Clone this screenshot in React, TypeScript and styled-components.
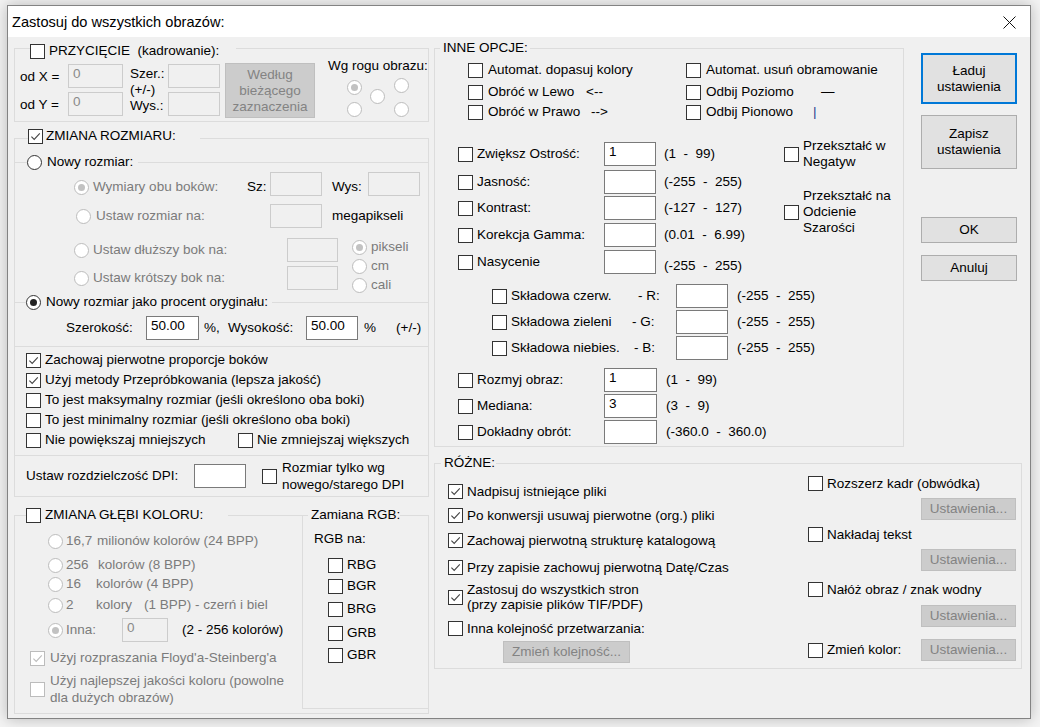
import React from "react";
import styled, { createGlobalStyle } from "styled-components";

const GlobalStyle = createGlobalStyle`
  html, body { margin: 0; padding: 0; }
  body {
    background: #f4f4f4;
    font-family: "Liberation Sans", Arial, sans-serif;
    font-size: 13.5px;
    color: #000;
  }
  *, *::before, *::after { box-sizing: border-box; }
`;

const Page = styled.div`
  width: 1040px;
  height: 727px;
  padding: 5px 0 0 7px;
  overflow: hidden;
`;

const Window = styled.div`
  width: 1024px;
  height: 714px;
  border: 1px solid #838383;
  background: #f0f0f0;
  box-shadow: 0 0 14px rgba(0, 0, 0, 0.25);
  display: flex;
  flex-direction: column;
`;

const TitleBar = styled.div`
  flex: none;
  height: 31px;
  background: #fff;
  display: flex;
  align-items: center;
  padding-left: 4px;
`;

const Title = styled.div`
  flex: 1;
  font-size: 14.6px;
  line-height: 18px;
  padding-top: 1px;
`;

const Close = styled.div`
  flex: none;
  width: 13px;
  height: 13px;
  margin: 2px 14px 0 0;
  display: flex;
`;

const Body = styled.div`
  flex: 1;
  display: flex;
  align-items: flex-start;
  padding-left: 6px;
`;

const Column = styled.div<{ $w?: number; $ml?: number; $mt?: number; $pt?: number; $gap?: number }>`
  flex: none;
  display: flex;
  flex-direction: column;
  align-items: flex-start;
  ${(p) => (p.$w != null ? `width: ${p.$w}px;` : "")}
  margin-left: ${(p) => p.$ml ?? 0}px;
  margin-top: ${(p) => p.$mt ?? 0}px;
  padding-top: ${(p) => p.$pt ?? 0}px;
  gap: ${(p) => p.$gap ?? 0}px;
`;

const Row = styled.div<{ $h: number; $mt?: number; $top?: boolean }>`
  flex: none;
  display: flex;
  align-items: ${(p) => (p.$top ? "flex-start" : "center")};
  height: ${(p) => p.$h}px;
  margin-top: ${(p) => p.$mt ?? 0}px;
`;

const Slot = styled.div<{ $w?: number; $ml?: number; $mt?: number; $gap?: number }>`
  flex: none;
  display: flex;
  align-items: center;
  ${(p) => (p.$w != null ? `width: ${p.$w}px;` : "")}
  margin-left: ${(p) => p.$ml ?? 0}px;
  ${(p) => (p.$mt != null ? `align-self: flex-start; margin-top: ${p.$mt}px;` : "")}
  gap: ${(p) => p.$gap ?? 0}px;
`;

const Text = styled.span<{ $dim?: boolean; $color?: string; $lh?: number }>`
  white-space: pre;
  line-height: ${(p) => p.$lh ?? 16}px;
  color: ${(p) => p.$color ?? (p.$dim ? "#7b7b7b" : "#000")};
`;

const Mark = styled.span<{ $dim?: boolean; $round?: boolean }>`
  flex: none;
  width: 15px;
  height: 15px;
  border: 1px solid ${(p) => (p.$dim ? "#bcbcbc" : "#333")};
  border-radius: ${(p) => (p.$round ? "50%" : "0")};
  background: #fff;
  display: flex;
  align-items: center;
  justify-content: center;
`;

const Dot = styled.span<{ $dim?: boolean }>`
  width: 7px;
  height: 7px;
  border-radius: 50%;
  background: ${(p) => (p.$dim ? "#c2c2c2" : "#222")};
`;

const Field = styled.div<{ $w: number; $dim?: boolean }>`
  flex: none;
  width: ${(p) => p.$w}px;
  height: 24px;
  border: 1px solid ${(p) => (p.$dim ? "#cccccc" : "#7a7a7a")};
  background: ${(p) => (p.$dim ? "#f0f0f0" : "#fff")};
  color: ${(p) => (p.$dim ? "#8a8a8a" : "#000")};
  padding: 1px 0 0 4px;
  line-height: 16px;
  white-space: pre;
`;

const Btn = styled.button<{
  $w: number;
  $h: number;
  $ml?: number;
  $mt?: number;
  $dim?: boolean;
  $default?: boolean;
}>`
  flex: none;
  width: ${(p) => p.$w}px;
  height: ${(p) => p.$h}px;
  margin: ${(p) => p.$mt ?? 0}px 0 0 ${(p) => p.$ml ?? 0}px;
  padding: 0;
  font: inherit;
  line-height: 16px;
  display: flex;
  align-items: center;
  justify-content: center;
  text-align: center;
  white-space: pre;
  background: ${(p) => (p.$dim ? "#cccccc" : "#e1e1e1")};
  color: ${(p) => (p.$dim ? "#838383" : "#000")};
  border: ${(p) => (p.$default ? "2px solid #0078d7" : `1px solid ${p.$dim ? "#bfbfbf" : "#adadad"}`)};
`;

const Group = styled.div<{ $w: number; $h: number; $mt?: number; $ml?: number }>`
  flex: none;
  width: ${(p) => p.$w}px;
  height: ${(p) => p.$h}px;
  margin-top: ${(p) => p.$mt ?? 0}px;
  margin-left: ${(p) => p.$ml ?? 0}px;
  border: 1px solid #dcdcdc;
  display: flex;
  flex-direction: column;
`;

const SubGroup = styled.div<{ $w: number; $h: number }>`
  flex: none;
  width: ${(p) => p.$w}px;
  height: ${(p) => p.$h}px;
  border-left: 1px solid #dcdcdc;
  border-bottom: 1px solid #dcdcdc;
  display: flex;
  flex-direction: column;
`;

const Legend = styled.div<{ $x: number; $top: number; $w: number; $gap?: number; $pl?: number }>`
  flex: none;
  align-self: flex-start;
  display: flex;
  align-items: center;
  width: ${(p) => p.$w}px;
  height: 16px;
  margin: ${(p) => p.$top}px 0 ${(p) => -(p.$top + 16)}px ${(p) => p.$x}px;
  padding-left: ${(p) => p.$pl ?? 0}px;
  gap: ${(p) => p.$gap ?? 0}px;
  background: #f0f0f0;
  position: relative;
  z-index: 1;
`;

const Section = styled.div<{ $mt: number }>`
  flex: none;
  display: flex;
  flex-direction: column;
  border-top: 1px solid #dcdcdc;
  margin-top: ${(p) => p.$mt}px;
`;

const CornerGrid = styled.div`
  display: grid;
  grid-template-columns: 23px 24px 15px;
  grid-template-rows: 11px 13px 15px;
  margin: 4px 0 0 19px;
`;

const Cell = styled.div<{ $r: number; $c: number; $dy?: number }>`
  grid-row: ${(p) => p.$r};
  grid-column: ${(p) => p.$c};
  margin-top: ${(p) => p.$dy ?? 0}px;
  height: 15px;
`;

const Check = ({ on, dim }: { on?: boolean; dim?: boolean }) => (
  <Mark $dim={dim}>
    {on && (
      <svg width="13" height="13" viewBox="0 0 13 13">
        <path
          d="M2.4 6.6 L5.2 9.4 L10.8 3.4"
          fill="none"
          stroke={dim ? "#bcbcbc" : "#444"}
          strokeWidth="1.1"
        />
      </svg>
    )}
  </Mark>
);

const Radio = ({ on, dim }: { on?: boolean; dim?: boolean }) => (
  <Mark $round $dim={dim}>
    {on && <Dot $dim={dim} />}
  </Mark>
);

type CbRowProps = { label: string; on?: boolean; mt?: number };

const CropGroup = () => (
  <Group $w={415} $h={74} $mt={11}>
    <Legend $x={15} $top={-6} $w={206} $gap={4}>
      <Check />
      <Text>{"PRZYCIĘCIE  (kadrowanie):"}</Text>
    </Legend>
    <Row $h={72} $top>
      <Column $ml={5} $w={48} $pt={20} $gap={12}>
        <Text>od X =</Text>
        <Text>od Y =</Text>
      </Column>
      <Column $w={55} $pt={15} $gap={4}>
        <Field $w={55} $dim>0</Field>
        <Field $w={55} $dim>0</Field>
      </Column>
      <Column $ml={7} $w={38} $pt={17}>
        <Text>Szer.:</Text>
        <Text>(+/-)</Text>
        <Text>Wys.:</Text>
      </Column>
      <Column $w={52} $pt={15} $gap={4}>
        <Field $w={52} $dim />
        <Field $w={52} $dim />
      </Column>
      <Btn $w={90} $h={55} $ml={5} $mt={14} $dim>
        <span>{"Według\nbieżącego\nzaznaczenia"}</span>
      </Btn>
      <Column $ml={13} $pt={9}>
        <Text>Wg rogu obrazu:</Text>
        <CornerGrid>
          <Cell $r={1} $c={1} $dy={2}>
            <Radio on dim />
          </Cell>
          <Cell $r={1} $c={3}>
            <Radio dim />
          </Cell>
          <Cell $r={2} $c={2}>
            <Radio dim />
          </Cell>
          <Cell $r={3} $c={1}>
            <Radio dim />
          </Cell>
          <Cell $r={3} $c={3}>
            <Radio dim />
          </Cell>
        </CornerGrid>
      </Column>
    </Row>
  </Group>
);

const SideRow = ({ label, mt }: { label: string; mt?: number }) => (
  <Row $h={24} $mt={mt}>
    <Slot $w={213} $gap={4}>
      <Radio dim />
      <Text $dim>{label}</Text>
    </Slot>
    <Field $w={51} $dim />
  </Row>
);

const ResizeCheck = ({ label, on, mt }: CbRowProps) => (
  <Row $h={20} $mt={mt}>
    <Slot $ml={11} $gap={4}>
      <Check on={on} />
      <Text>{label}</Text>
    </Slot>
  </Row>
);

const ResizeGroup = () => (
  <Group $w={415} $h={359} $mt={16}>
    <Legend $x={13} $top={-11} $w={172} $gap={3}>
      <Check on />
      <Text>ZMIANA ROZMIARU:</Text>
    </Legend>
    <Section $mt={23}>
      <Legend $x={12} $top={-9} $w={111} $gap={5}>
        <Radio />
        <Text>Nowy rozmiar:</Text>
      </Legend>
      <Row $h={24} $mt={9}>
        <Slot $ml={59} $w={173} $gap={4} $mt={7}>
          <Radio on dim />
          <Text $dim>Wymiary obu boków:</Text>
        </Slot>
        <Slot $w={23} $mt={7}>
          <Text>Sz:</Text>
        </Slot>
        <Field $w={52} $dim />
        <Slot $ml={10} $w={36} $mt={7}>
          <Text>Wys:</Text>
        </Slot>
        <Field $w={52} $dim />
      </Row>
      <Row $h={24} $mt={8}>
        <Slot $ml={61} $w={194} $gap={5}>
          <Radio dim />
          <Text $dim>Ustaw rozmiar na:</Text>
        </Slot>
        <Field $w={52} $dim />
        <Slot $ml={10}>
          <Text>megapikseli</Text>
        </Slot>
      </Row>
      <Row $h={52} $mt={10} $top>
        <Column $ml={59}>
          <SideRow label="Ustaw dłuższy bok na:" />
          <SideRow label="Ustaw krótszy bok na:" mt={4} />
        </Column>
        <Column $ml={14} $pt={1} $gap={3}>
          <Slot $gap={4}>
            <Radio on dim />
            <Text $dim>pikseli</Text>
          </Slot>
          <Slot $gap={4}>
            <Radio dim />
            <Text $dim>cm</Text>
          </Slot>
          <Slot $gap={4}>
            <Radio dim />
            <Text $dim>cali</Text>
          </Slot>
        </Column>
      </Row>
    </Section>
    <Section $mt={12}>
      <Legend $x={11} $top={-9} $w={246} $gap={5}>
        <Radio on />
        <Text>Nowy rozmiar jako procent oryginału:</Text>
      </Legend>
      <Row $h={24} $mt={13}>
        <Slot $ml={51} $w={80}>
          <Text>Szerokość:</Text>
        </Slot>
        <Field $w={53}>50.00</Field>
        <Slot $ml={5} $w={24}>
          <Text>%,</Text>
        </Slot>
        <Slot $w={78}>
          <Text>Wysokość:</Text>
        </Slot>
        <Field $w={52}>50.00</Field>
        <Slot $ml={6} $w={32}>
          <Text>%</Text>
        </Slot>
        <Text>(+/-)</Text>
      </Row>
    </Section>
    <Section $mt={6}>
      <ResizeCheck label="Zachowaj pierwotne proporcje boków" on mt={3} />
      <ResizeCheck label="Użyj metody Przepróbkowania (lepsza jakość)" on />
      <ResizeCheck label="To jest maksymalny rozmiar (jeśli określono oba boki)" />
      <ResizeCheck label="To jest minimalny rozmiar (jeśli określono oba boki)" />
      <Row $h={20}>
        <Slot $ml={11} $w={212} $gap={4}>
          <Check />
          <Text>Nie powiększaj mniejszych</Text>
        </Slot>
        <Slot $gap={4}>
          <Check />
          <Text>Nie zmniejszaj większych</Text>
        </Slot>
      </Row>
    </Section>
    <Section $mt={5}>
      <Row $h={24} $mt={8}>
        <Slot $ml={11} $w={168}>
          <Text>Ustaw rozdzielczość DPI:</Text>
        </Slot>
        <Field $w={52} />
        <Slot $ml={16} $gap={5}>
          <Check />
          <Text $lh={17}>{"Rozmiar tylko wg\nnowego/starego DPI"}</Text>
        </Slot>
      </Row>
    </Section>
  </Group>
);

const DepthRow = ({
  mt,
  h = 18,
  parts,
  widths,
  on,
}: {
  mt: number;
  h?: number;
  parts: string[];
  widths: number[];
  on?: boolean;
}) => (
  <Row $h={h} $mt={mt}>
    <Slot $ml={33} $w={18}>
      <Radio dim on={on} />
    </Slot>
    {parts.map((p, i) => (
      <Slot key={i} $w={widths[i]}>
        <Text $dim>{p}</Text>
      </Slot>
    ))}
  </Row>
);

const RgbRow = ({ label, mt }: { label: string; mt: number }) => (
  <Row $h={20} $mt={mt}>
    <Slot $ml={25} $gap={4}>
      <Check />
      <Text>{label}</Text>
    </Slot>
  </Row>
);

const DepthGroup = () => (
  <Group $w={415} $h={199} $mt={18}>
    <Legend $x={11} $top={-9} $w={202} $gap={4}>
      <Check />
      <Text>ZMIANA GŁĘBI KOLORU:</Text>
    </Legend>
    <Row $h={197} $top>
      <Column $w={287}>
        <DepthRow mt={16} parts={["16,7", "milionów kolorów (24 BPP)"]} widths={[31]} />
        <DepthRow mt={6} parts={["256", "kolorów (8 BPP)"]} widths={[32]} />
        <DepthRow mt={1} parts={["16", "kolorów (4 BPP)"]} widths={[30]} />
        <DepthRow mt={3} parts={["2", "kolory", "(1 BPP) - czerń i biel"]} widths={[30, 48]} />
        <Row $h={24} $mt={4}>
          <Slot $ml={33} $w={18}>
            <Radio dim on />
          </Slot>
          <Slot $w={56}>
            <Text $dim>Inna:</Text>
          </Slot>
          <Field $w={46} $dim>
            0
          </Field>
          <Slot $ml={14}>
            <Text>(2 - 256 kolorów)</Text>
          </Slot>
        </Row>
        <Row $h={18} $mt={7}>
          <Slot $ml={15} $gap={5}>
            <Check on dim />
            <Text $dim>Użyj rozpraszania Floyd'a-Steinberg'a</Text>
          </Slot>
        </Row>
        <Row $h={34} $mt={5}>
          <Slot $ml={15} $gap={5}>
            <Check dim />
            <Text $dim $lh={17}>
              {"Użyj najlepszej jakości koloru (powolne\ndla dużych obrazów)"}
            </Text>
          </Slot>
        </Row>
      </Column>
      <SubGroup $w={126} $h={193}>
        <Legend $x={5} $top={-9} $w={92} $pl={3}>
          <Text>Zamiana RGB:</Text>
        </Legend>
        <Row $h={16} $mt={15}>
          <Slot $ml={11}>
            <Text>RGB na:</Text>
          </Slot>
        </Row>
        <RgbRow label="RBG" mt={8} />
        <RgbRow label="BGR" mt={1} />
        <RgbRow label="BRG" mt={3} />
        <RgbRow label="GRB" mt={4} />
        <RgbRow label="GBR" mt={2} />
      </SubGroup>
    </Row>
  </Group>
);

const OptPair = ({
  mt,
  left,
  leftW,
  leftExtra,
  right,
  rightW,
  rightExtra,
  extraColor,
}: {
  mt: number;
  left: string;
  leftW?: number;
  leftExtra?: string;
  right: string;
  rightW?: number;
  rightExtra?: string;
  extraColor?: string;
}) => (
  <Row $h={20} $mt={mt}>
    <Slot $ml={33} $w={218} $gap={5}>
      <Check />
      <Slot $w={leftW}>
        <Text>{left}</Text>
      </Slot>
      {leftExtra && <Text>{leftExtra}</Text>}
    </Slot>
    <Slot $gap={5}>
      <Check />
      <Slot $w={rightW}>
        <Text>{right}</Text>
      </Slot>
      {rightExtra && <Text $color={extraColor}>{rightExtra}</Text>}
    </Slot>
  </Row>
);

const AdjRow = ({
  label,
  value,
  range,
  mt,
  rangeMt,
  ml = 23,
  rangeMl = 8,
  fieldW = 52,
}: {
  label: string;
  value?: string;
  range: string;
  mt?: number;
  rangeMt?: number;
  ml?: number;
  rangeMl?: number;
  fieldW?: number;
}) => (
  <Row $h={24} $mt={mt}>
    <Slot $ml={ml} $w={146} $gap={4}>
      <Check />
      <Text>{label}</Text>
    </Slot>
    <Field $w={fieldW}>{value}</Field>
    <Slot $ml={rangeMl} $mt={rangeMt}>
      <Text>{range}</Text>
    </Slot>
  </Row>
);

const ChannelRow = ({
  label,
  suffix,
  labelW,
  mt,
}: {
  label: string;
  suffix: string;
  labelW: number;
  mt: number;
}) => (
  <Row $h={24} $mt={mt}>
    <Slot $ml={57} $w={184} $gap={4}>
      <Check />
      <Slot $w={labelW}>
        <Text>{label}</Text>
      </Slot>
      <Text>{suffix}</Text>
    </Slot>
    <Field $w={52} />
    <Slot $ml={9}>
      <Text>{"(-255  -  255)"}</Text>
    </Slot>
  </Row>
);

const OtherGroup = () => (
  <Group $w={470} $h={399} $mt={11}>
    <Legend $x={5} $top={-9} $w={90} $pl={3}>
      <Text>INNE OPCJE:</Text>
    </Legend>
    <OptPair mt={11} left="Automat. dopasuj kolory" right="Automat. usuń obramowanie" />
    <OptPair
      mt={2}
      left="Obróć w Lewo"
      leftW={93}
      leftExtra="<--"
      right="Odbij Poziomo"
      rightW={110}
      rightExtra="—"
    />
    <OptPair
      mt={0}
      left="Obróć w Prawo"
      leftW={98}
      leftExtra="-->"
      right="Odbij Pionowo"
      rightW={102}
      rightExtra="|"
      extraColor="#23408e"
    />
    <Row $h={132} $mt={20} $top>
      <Column $w={349}>
        <AdjRow label="Zwiększ Ostrość:" value="1" range="(1  -  99)" />
        <AdjRow label="Jasność:" range="(-255  -  255)" mt={4} />
        <AdjRow label="Kontrast:" range="(-127  -  127)" mt={2} />
        <AdjRow label="Korekcja Gamma:" range="(0.01  -  6.99)" mt={3} />
        <AdjRow label="Nasycenie" range="(-255  -  255)" mt={3} rangeMt={8} />
      </Column>
      <Column $mt={-4}>
        <Slot $gap={4}>
          <Check />
          <Text>{"Przekształć w\nNegatyw"}</Text>
        </Slot>
        <Slot $gap={4} $mt={18}>
          <Check />
          <Text>{"Przekształć na\nOdcienie\nSzarości"}</Text>
        </Slot>
      </Column>
    </Row>
    <ChannelRow label="Składowa czerw." suffix="- R:" labelW={123} mt={10} />
    <ChannelRow label="Składowa zieleni" suffix="- G:" labelW={117} mt={2} />
    <ChannelRow label="Składowa niebies." suffix="- B:" labelW={119} mt={2} />
    <AdjRow label="Rozmyj obraz:" value="1" range="(1  -  99)" mt={8} rangeMl={9} fieldW={53} />
    <AdjRow label="Mediana:" value="3" range="(3  -  9)" mt={2} rangeMl={9} fieldW={53} />
    <AdjRow label="Dokładny obrót:" range="(-360.0  -  360.0)" mt={2} rangeMl={9} fieldW={53} />
  </Group>
);

const MiscCheck = ({ label, on, mt, h = 20, ml = 13 }: CbRowProps & { h?: number; ml?: number }) => (
  <Row $h={h} $mt={mt}>
    <Slot $ml={ml} $gap={4}>
      <Check on={on} />
      <Text $lh={15}>{label}</Text>
    </Slot>
  </Row>
);

const MiscGroup = () => (
  <Group $w={588} $h={206} $mt={16}>
    <Legend $x={6} $top={-9} $w={55} $pl={3}>
      <Text>RÓŻNE:</Text>
    </Legend>
    <Row $h={204} $top>
      <Column $w={373}>
        <MiscCheck label="Nadpisuj istniejące pliki" on mt={17} />
        <MiscCheck label="Po konwersji usuwaj pierwotne (org.) pliki" on mt={4} />
        <MiscCheck label="Zachowaj pierwotną strukturę katalogową" on mt={5} />
        <MiscCheck label="Przy zapisie zachowuj pierwotną Datę/Czas" on mt={7} />
        <MiscCheck
          label={"Zastosuj do wszystkich stron\n(przy zapisie plików TIF/PDF)"}
          on
          mt={5}
          h={30}
        />
        <MiscCheck label="Inna kolejność przetwarzania:" mt={6} />
        <Btn $w={127} $h={22} $ml={68} $mt={3} $dim>
          Zmień kolejność...
        </Btn>
      </Column>
      <Column>
        <MiscCheck label="Rozszerz kadr (obwódka)" mt={9} ml={0} />
        <Btn $w={95} $h={22} $ml={113} $mt={5} $dim>
          Ustawienia...
        </Btn>
        <MiscCheck label="Nakładaj tekst" mt={4} ml={0} />
        <Btn $w={95} $h={22} $ml={113} $mt={5} $dim>
          Ustawienia...
        </Btn>
        <MiscCheck label="Nałóż obraz / znak wodny" mt={8} ml={0} />
        <Btn $w={95} $h={22} $ml={113} $mt={6} $dim>
          Ustawienia...
        </Btn>
        <Row $h={22} $mt={12}>
          <Slot $w={113} $gap={4}>
            <Check />
            <Text>Zmień kolor:</Text>
          </Slot>
          <Btn $w={95} $h={22} $dim>
            Ustawienia...
          </Btn>
        </Row>
      </Column>
    </Row>
  </Group>
);

export default function App() {
  return (
    <>
      <GlobalStyle />
      <Page>
        <Window>
          <TitleBar>
            <Title>Zastosuj do wszystkich obrazów:</Title>
            <Close>
              <svg width="13" height="13" viewBox="0 0 13 13">
                <path d="M0.5 0.5 L12.5 12.5 M12.5 0.5 L0.5 12.5" stroke="#111" strokeWidth="1" fill="none" />
              </svg>
            </Close>
          </TitleBar>
          <Body>
            <Column $w={415}>
              <CropGroup />
              <ResizeGroup />
              <DepthGroup />
            </Column>
            <Column $w={588} $ml={5}>
              <Row $h={410} $top>
                <OtherGroup />
                <Column $ml={17} $mt={16}>
                  <Btn $w={96} $h={51} $default>
                    <span>{"Ładuj\nustawienia"}</span>
                  </Btn>
                  <Btn $w={96} $h={54} $mt={11}>
                    <span>{"Zapisz\nustawienia"}</span>
                  </Btn>
                  <Btn $w={96} $h={26} $mt={48}>
                    OK
                  </Btn>
                  <Btn $w={96} $h={26} $mt={12}>
                    Anuluj
                  </Btn>
                </Column>
              </Row>
              <MiscGroup />
            </Column>
          </Body>
        </Window>
      </Page>
    </>
  );
}
